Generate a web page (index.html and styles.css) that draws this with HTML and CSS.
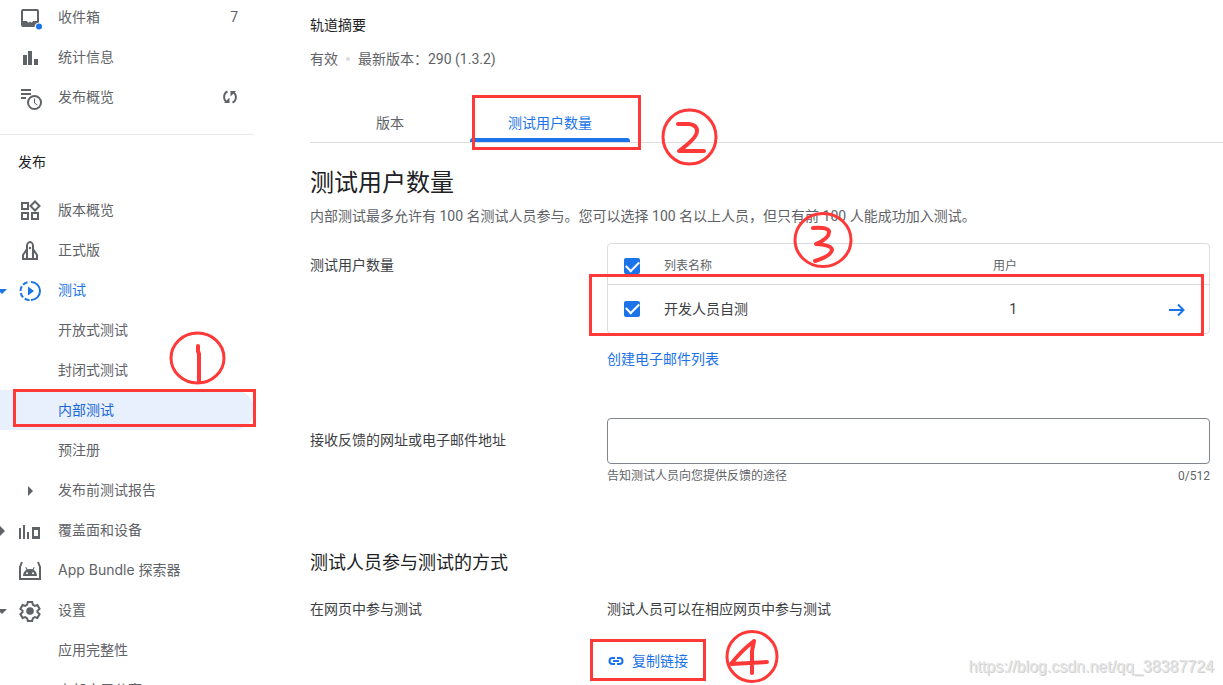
FILE: index.html
```html
<!DOCTYPE html>
<html lang="zh-CN">
<head>
<meta charset="utf-8">
<meta name="viewport" content="width=device-width, initial-scale=1">
<title>内部测试</title>
<link rel="stylesheet" href="styles.css">
</head>
<body>
<div class="app">
  <nav class="sidebar">
    <a class="item" href="#">
      <svg class="icon" viewBox="0 0 24 24"><path fill-rule="evenodd" d="M5 3h14a2 2 0 0 1 2 2v11.500a5 5 0 0 0-4.500 4.500H5a2 2 0 0 1-2-2V5a2 2 0 0 1 2-2zm0 2v10h4c.5 1 1 1.500 1.800 1.500L12 15.500l1.200 1c.8 0 1.300-.5 1.800-1.500h4V5z"/><circle class="blue" cx="21" cy="20.500" r="3"/></svg>
      <span class="label">收件箱</span><span class="count">7</span>
    </a>
    <a class="item" href="#">
      <svg class="icon" viewBox="0 0 24 24"><path d="M5 9h4v10H5zM10 5h4v14h-4zM16 13h4v6h-4z"/></svg>
      <span class="label">统计信息</span>
    </a>
    <a class="item" href="#">
      <svg class="icon" viewBox="0 0 24 24"><path d="M3 3h10v2H3zM3 7h10v2H3zM3 11h5v2H3z"/><circle class="line" cx="16.500" cy="16.500" r="6.500"/><path class="thin" d="M16.500 12.500v4.500l3 2"/></svg>
      <span class="label">发布概览</span>
      <svg class="sync" viewBox="0 0 16 14"><path class="line" d="M5.500 12.200C1 10.500 1 3.500 5.500 1.500M10.500 1.800c4.500 2 4.500 8.700 0 10.700"/><path d="M2 13h5.500V7.500zM14 1H8.500v5.500z"/></svg>
    </a>
    <h2 class="group">发布</h2>
    <a class="item" href="#">
      <svg class="icon" viewBox="0 0 24 24"><path class="line" d="M4 4h6v6H4zM4 14h6v6H4zM14 14h6v6h-6zM17 2.500L21.500 7 17 11.500 12.500 7z"/></svg>
      <span class="label">版本概览</span>
    </a>
    <a class="item" href="#">
      <svg class="icon" viewBox="0 0 24 24"><path class="line" d="M9 20V7c0-2 1.300-4 3-4s3 2 3 4v13M9 10l-4 6v4h14v-4l-4-6"/><circle cx="12" cy="9" r="1.200"/></svg>
      <span class="label">正式版</span>
    </a>
    <a class="item open" href="#">
      <svg class="caret" viewBox="0 0 8 10"><path d="M-3 3H7L2 8z"/></svg>
      <svg class="icon" viewBox="0 0 24 24"><path class="line" d="M13 3a9 9 0 0 1 0 18"/><path class="line" stroke-dasharray="5 2" d="M11.500 21A9 9 0 0 1 11.500 3"/><path d="M10 7.500v9l6-4.500z"/></svg>
      <span class="label">测试</span>
    </a>
    <a class="item" href="#"><span class="label">开放式测试</span></a>
    <a class="item" href="#"><span class="label">封闭式测试</span></a>
    <a class="item current" href="#" aria-current="page"><span class="label">内部测试</span></a>
    <a class="item" href="#"><span class="label">预注册</span></a>
    <a class="item" href="#">
      <svg class="icon" viewBox="0 0 24 24"><path d="M10 7v10l5-5z"/></svg>
      <span class="label">发布前测试报告</span>
    </a>
    <a class="item" href="#">
      <svg class="caret" viewBox="0 0 8 10"><path d="M0 0v10l5-5z"/></svg>
      <svg class="icon" viewBox="0 0 24 24"><path d="M1 9h2v11H1zM5 6h2v14H5zM9 13h2v7H9z"/><path fill-rule="evenodd" d="M14 8h8v12h-8zm2 3v6h4v-6z"/></svg>
      <span class="label">覆盖面和设备</span>
    </a>
    <a class="item" href="#">
      <svg class="icon" viewBox="0 0 24 24"><path class="line" d="M4 3L2 8v12h20V8l-2-5"/><path fill-rule="evenodd" d="M5 17c0-3 1.500-5 3.500-6.200L7.300 8.500l.9-.5 1.300 2.300a8 8 0 0 1 5 0L15.800 8l.9.500-1.200 2.300C17.500 12 19 14 19 17zm4-3.800a1 1 0 1 0 0 2 1 1 0 0 0 0-2zm6 0a1 1 0 1 0 0 2 1 1 0 0 0 0-2z"/></svg>
      <span class="label latin">App Bundle 探索器</span>
    </a>
    <a class="item" href="#">
      <svg class="caret" viewBox="0 0 8 10"><path d="M-3 3H7L2 8z"/></svg>
      <svg class="icon" viewBox="0 0 24 24"><path class="line" d="M9.800 3h4.400l.6 2.700 2 1.200 2.600-.9 2.200 3.900-2.100 1.800v1.600l2.100 1.800-2.200 3.900-2.600-.9-2 1.200-.6 2.700H9.800l-.6-2.700-2-1.200-2.600.9-2.200-3.900 2.100-1.800v-1.600L2.400 9.900 4.600 6l2.600.9 2-1.200z"/><circle cx="12" cy="12" r="3.800"/></svg>
      <span class="label">设置</span>
    </a>
    <a class="item" href="#"><span class="label">应用完整性</span></a>
    <a class="item" href="#"><span class="label">内部应用分享</span></a>
  </nav>

  <main class="main">
    <h2 class="summary-title">轨道摘要</h2>
    <p class="summary"><span>有效</span><i class="dot"></i><span>最新版本：290 (1.3.2)</span></p>

    <div class="tabs" role="tablist">
      <button class="tab" type="button" role="tab" aria-selected="false">版本</button>
      <button class="tab selected" type="button" role="tab" aria-selected="true">测试用户数量</button>
    </div>

    <h1 class="title">测试用户数量</h1>
    <p class="description">内部测试最多允许有 100 名测试人员参与。您可以选择 100 名以上人员，但只有前 100 人能成功加入测试。</p>

    <section class="row testers">
      <h3 class="row-label">测试用户数量</h3>
      <div class="row-body">
        <table class="lists">
          <thead>
            <tr>
              <th class="col-check"><input class="check" type="checkbox" checked aria-label="全选"></th>
              <th class="col-name">列表名称</th>
              <th class="col-users">用户</th>
              <th class="col-go"></th>
            </tr>
          </thead>
          <tbody>
            <tr>
              <td class="col-check"><input class="check" type="checkbox" id="list-1" checked></td>
              <td class="col-name"><label for="list-1">开发人员自测</label></td>
              <td class="col-users">1</td>
              <td class="col-go"><button class="go" type="button" aria-label="查看"><svg viewBox="0 0 16 14"><path class="line" d="M0 7h15M9 1.500L14.500 7 9 12.500"/></svg></button></td>
            </tr>
          </tbody>
        </table>
        <a class="create" href="#">创建电子邮件列表</a>
      </div>
    </section>

    <section class="row feedback">
      <label class="row-label" for="feedback">接收反馈的网址或电子邮件地址</label>
      <div class="row-body">
        <input class="field" id="feedback" type="text" maxlength="512">
        <div class="hint"><span>告知测试人员向您提供反馈的途径</span><span>0/512</span></div>
      </div>
    </section>

    <h2 class="subtitle">测试人员参与测试的方式</h2>
    <section class="row">
      <h3 class="row-label">在网页中参与测试</h3>
      <div class="row-body">
        <p class="text">测试人员可以在相应网页中参与测试</p>
        <button class="copy" type="button"><svg viewBox="0 0 16 10"><path class="line" d="M7 2H4.500a3 3 0 0 0 0 6H7M9 2h2.500a3 3 0 0 1 0 6H9M5 5h6"/></svg>复制链接</button>
      </div>
    </section>
  </main>

  <svg class="marks" width="1223" height="685" viewBox="0 0 1223 685" aria-hidden="true">
    <rect x="14.500" y="390.500" width="240" height="35"/>
    <rect x="473.500" y="96.500" width="166" height="52"/>
    <rect x="590.500" y="275.500" width="612" height="59"/>
    <rect x="591.500" y="640.500" width="113" height="39"/>
    <ellipse cx="197.500" cy="358" rx="26.500" ry="25"/>
    <ellipse cx="689.500" cy="137" rx="26.500" ry="27"/>
    <ellipse cx="823" cy="240" rx="28" ry="26.500"/>
    <ellipse cx="752" cy="656.500" rx="25" ry="25"/>
    <path class="pen" d="M198 346v5l1 3v27"/>
    <path class="pen" d="M678 124h11q8 1 8 7 0 7-18 20h25"/>
    <path class="pen" d="M813 228q14-1 16 3 1 7-13 13 16 1 16 6-1 6-17 11"/>
    <path class="pen" d="M752 673v-22l2-10q-13 10-23 23l36-2"/>
  </svg>
  <div class="watermark">https://blog.csdn.net/qq_38387724</div>
</div>
</body>
</html>
```
FILE: styles.css
```css
* {
  box-sizing: border-box;
}

body {
  margin: 0;
  background: #fff;
  color: #202124;
  font: 14px/20px Roboto, "Noto Sans CJK SC", sans-serif;
}

h1, h2, h3, p {
  margin: 0;
  font-weight: 400;
}

button {
  padding: 0;
  border: 0;
  background: none;
  color: inherit;
  font: inherit;
  cursor: pointer;
}

a {
  text-decoration: none;
}

svg {
  display: block;
  fill: currentColor;
}

.line {
  fill: none;
  stroke: currentColor;
  stroke-width: 2;
}

.thin {
  fill: none;
  stroke: currentColor;
}

.blue {
  fill: #1a73e8;
}

.app {
  position: relative;
  display: flex;
  height: 100vh;
  overflow: hidden;
}

/* Sidebar */
.sidebar {
  flex: none;
  width: 254px;
  margin-top: -3px;
}

.item {
  display: grid;
  grid-template-columns: 18px 24px 1fr auto;
  align-items: center;
  height: 40px;
  padding-right: 16px;
  border-radius: 0 20px 20px 0;
  color: #5f6368;
}

.caret {
  grid-area: 1 / 1;
  width: 8px;
  height: 10px;
  margin-top: 2px;
}

.icon {
  grid-area: 1 / 2;
  width: 24px;
  height: 24px;
  margin-top: 2px;
  overflow: visible;
}

.label {
  grid-area: 1 / 3;
  padding-left: 16px;
}

.latin {
  font-family: Inter, "Noto Sans CJK SC", sans-serif;
}

.count,
.sync {
  grid-area: 1 / 4;
}

.sync {
  width: 16px;
  height: 14px;
}

.item.open {
  color: #1a73e8;
}

.item.current {
  background: #e8f0fe;
  color: #1967d2;
}

.group {
  margin-top: 17px;
  padding: 17px 18px 18px;
  border-top: 1px solid #e8eaed;
  font-size: 14px;
}

/* Main column */
.main {
  flex: 1;
  min-width: 0;
  padding: 15px 0 0 56px;
}

.summary-title {
  font-size: 14px;
}

.summary {
  display: flex;
  align-items: center;
  margin-top: 14px;
  color: #5f6368;
}

.dot {
  width: 4px;
  height: 4px;
  margin: 0 8px;
  border-radius: 50%;
  background: #dadce0;
}

.tabs {
  display: flex;
  margin-top: 35px;
  border-bottom: 1px solid #dadce0;
}

.tab {
  width: 160px;
  height: 38px;
  color: #5f6368;
}

.tab.selected {
  position: relative;
  color: #1a73e8;
}

.tab.selected::after {
  content: "";
  position: absolute;
  right: 0;
  bottom: 0;
  left: 0;
  height: 4px;
  border-radius: 3px 3px 0 0;
  background: #1a73e8;
}

.title {
  margin-top: 24px;
  font-size: 24px;
  line-height: 32px;
}

.description {
  margin-top: 7px;
  color: #5f6368;
}

.row {
  display: grid;
  grid-template-columns: 297px 1fr;
  padding-right: 13px;
}

.row-label {
  color: #3c4043;
  font-size: 14px;
}

.testers {
  margin-top: 17px;
}

.testers .row-label,
.feedback .row-label {
  padding-top: 12px;
}

.lists {
  width: 100%;
  border: 1px solid #dadce0;
  border-radius: 4px;
  border-spacing: 0;
  table-layout: fixed;
  color: #3c4043;
}

.lists th,
.lists td {
  padding: 0;
  text-align: left;
}

.lists th {
  height: 41px;
  padding-top: 4px;
  border-bottom: 1px solid #dadce0;
  color: #5f6368;
  font-size: 12px;
  font-weight: 400;
}

.lists td {
  height: 48px;
  padding-bottom: 1px;
}

.lists .col-check {
  width: 56px;
  padding-left: 16px;
}

.lists .col-users {
  width: 80px;
  text-align: right;
}

.lists .col-go {
  width: 192px;
  padding-right: 24px;
}

.check {
  display: grid;
  place-items: center;
  width: 16px;
  height: 16px;
  margin: 0;
  border-radius: 2px;
  background: #1a73e8;
  appearance: none;
}

.check:checked::before {
  content: "";
  width: 11px;
  height: 6px;
  margin-bottom: 3px;
  border: solid #fff;
  border-width: 0 0 2px 2px;
  transform: rotate(-45deg);
}

.go {
  display: block;
  margin: 2px 0 0 auto;
  color: #1a73e8;
}

.go svg {
  width: 16px;
  height: 14px;
}

.create {
  display: inline-block;
  margin-top: 15px;
  color: #1a73e8;
}

.feedback {
  margin-top: 49px;
}

.field {
  display: block;
  width: 100%;
  height: 46px;
  padding: 0 16px;
  border: 1px solid #80868b;
  border-radius: 4px;
  font: inherit;
}

.hint {
  display: flex;
  justify-content: space-between;
  margin-top: 2px;
  color: #5f6368;
  font-size: 12px;
}

.subtitle {
  margin: 63px 0 22px;
  font-size: 18px;
  line-height: 28px;
}

.text {
  color: #3c4043;
}

.copy {
  display: flex;
  align-items: center;
  gap: 8px;
  height: 36px;
  margin-top: 24px;
  padding-left: 1px;
  color: #1a73e8;
}

.copy svg {
  width: 16px;
  height: 10px;
}

/* Hand-drawn step marks */
.marks {
  position: absolute;
  top: 0;
  left: 0;
  fill: none;
  stroke: #ff3838;
  stroke-width: 3;
  pointer-events: none;
}

.pen {
  stroke-width: 4;
  stroke-linecap: round;
  stroke-linejoin: round;
}

.watermark {
  position: absolute;
  right: 9px;
  bottom: 8px;
  color: #e4e4e4;
  font: 16px/20px "Liberation Sans", sans-serif;
  text-shadow: 1px 1px 0 #d0d0d0;
}
```
